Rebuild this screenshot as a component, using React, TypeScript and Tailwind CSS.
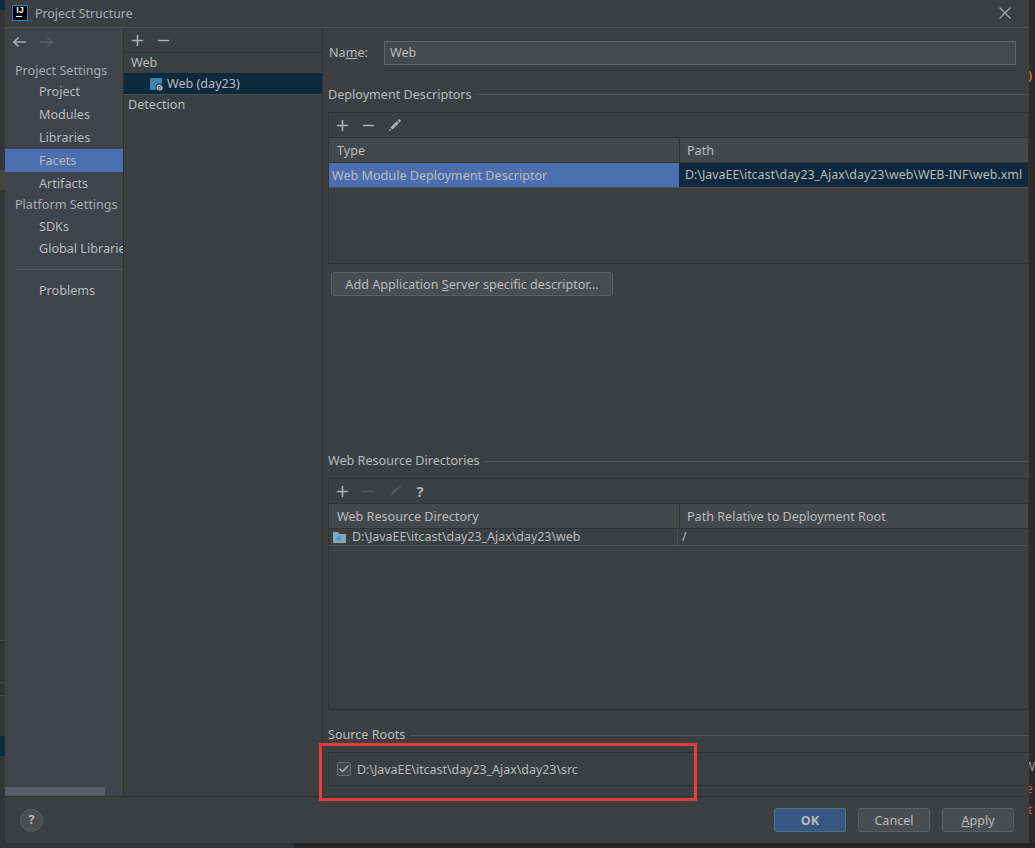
import { Check, Minus, Plus, X } from 'lucide-react';

const SIDE_ITEMS = ['Project', 'Modules', 'Libraries', 'Facets', 'Artifacts'];

function SectionTitle({ label, className, spanClass }: { label: string; className: string; spanClass?: string }) {
  return (
    <div className={`flex items-center gap-[5px] h-[18px] ${className}`}>
      <span className={`text-[#bbbbbb] whitespace-nowrap ${spanClass ?? ''}`}>{label}</span>
      <div className="flex-1 h-px bg-[#505254]" />
    </div>
  );
}

function ToolIcon({ children }: { children: React.ReactNode }) {
  return <div className="w-[26px] h-[16px] flex items-center justify-center shrink-0">{children}</div>;
}

function PencilIcon({ color }: { color: string }) {
  return (
    <svg width="15" height="15" viewBox="0 0 15 15" fill={color}>
      <path d="M3.4 9.6 9.8 3.2l2 2-6.4 6.4z" />
      <path d="M2.9 10.5l1.6 1.6-2.4.8z" />
      <path d="M10.6 2.4l.9-.9a1 1 0 0 1 1.4 0l.6.6a1 1 0 0 1 0 1.4l-.9.9z" />
    </svg>
  );
}

function HeaderCell({ label, first }: { label: string; first?: boolean }) {
  return (
    <div className={`h-full flex items-center pt-[2px] ${first ? 'w-[350px] pl-[8px]' : 'flex-1 pl-[7px]'}`}>
      <span className="text-[#bbbbbb] whitespace-nowrap">{label}</span>
    </div>
  );
}

function DialogButton({ children, primary }: { children: React.ReactNode; primary?: boolean }) {
  return (
    <button
      className={`w-[72px] h-[24px] pt-[2px] rounded-[3px] border text-[12.6px] ${
        primary
          ? 'bg-[#365880] border-[#4c708c] text-[#bbbbbb] font-bold'
          : 'bg-[#4a4d4f] border-[#5e6060] text-[#bbbbbb]'
      }`}
    >
      {children}
    </button>
  );
}

export default function App() {
  return (
    <div
      className="w-[1035px] h-[848px] overflow-hidden flex flex-col relative bg-[#2b2b2b] text-[12.6px] leading-[18px] text-[#bbbbbb]"
      style={{ fontFamily: '"Noto Sans", "Liberation Sans", sans-serif' }}
    >
      <div className="h-[843px] flex shrink-0">
        {/* sliver of the IDE behind the dialog */}
        <div className="w-[5px] h-full bg-[#323537] shrink-0 flex flex-col">
          <div className="h-[10px] bg-[#0d293e]" />
          <div className="h-[20px] mt-[160px] bg-[#45433a]" />
          <div className="h-px mt-[450px] bg-[#45484a]" />
          <div className="h-px mt-[41px] bg-[#45484a]" />
          <div className="h-px mt-[12px] bg-[#45484a]" />
          <div className="h-[20px] mt-[40px] bg-[#0d293e]" />
        </div>

        <div className="w-[1024px] h-full bg-[#3c3f41] flex flex-col shrink-0">
          {/* title bar */}
          <div className="h-[28px] flex items-center border-b border-[#515355] shrink-0 pl-[7px] pr-[14px]">
            <div className="w-[16px] h-[16px] mb-[2px] bg-black border border-[#1f7fe0] shrink-0 flex flex-col items-center justify-start">
              <span className="text-white text-[9px] leading-[9px] font-bold" style={{ fontFamily: '"Liberation Sans", sans-serif' }}>
                IJ
              </span>
              <div className="w-[6px] h-px bg-white mr-[3px] mt-[1px]" />
            </div>
            <span className="ml-[7px] mt-[1px] text-[12.4px] text-[#a9abad]">Project Structure</span>
            <X className="ml-auto mb-[2px] text-[#a3a5a7]" size={20} strokeWidth={1.5} />
          </div>

          <div className="flex-1 flex min-h-0 border-b border-[#323232]">
            {/* settings sidebar */}
            <div className="w-[119px] bg-[#3e434c] border-r border-[#323232] shrink-0 flex flex-col overflow-hidden relative">
              <div className="h-[28px] flex items-center pl-[7px] gap-[12px] shrink-0">
                <svg width="15" height="12" viewBox="0 0 15 12" fill="none" stroke="#a9acae" strokeWidth="1.7">
                  <path d="M14 6H2M6.5 1.5 2 6l4.5 4.5" />
                </svg>
                <svg width="15" height="12" viewBox="0 0 15 12" fill="none" stroke="#5b5e61" strokeWidth="1.7">
                  <path d="M1 6h12M8.5 1.5 13 6l-4.5 4.5" />
                </svg>
              </div>
              <div className="pl-[10px] h-[18px] mt-[6px] text-[#a9abad] whitespace-nowrap">Project Settings</div>
              <div>
                {SIDE_ITEMS.map((item) => (
                  <div
                    key={item}
                    className={`h-[23px] pl-[34px] flex items-center ${item === 'Facets' ? 'bg-[#4b6eaf]' : ''}`}
                  >
                    {item}
                  </div>
                ))}
              </div>
              <div className="pl-[10px] h-[18px] mt-[1px] text-[#a9abad] whitespace-nowrap">Platform Settings</div>
              <div className="h-[22px] pl-[34px] flex items-center mt-[2px]">SDKs</div>
              <div className="h-[22px] pl-[34px] flex items-center whitespace-nowrap">Global Libraries</div>
              <div className="h-px bg-[#505459] ml-[10px] mt-[9px] shrink-0" />
              <div className="h-[23px] pl-[34px] flex items-center mt-[9px]">Problems</div>
              <div className="absolute left-0 bottom-0 w-[100px] h-[9px] bg-[#5a5d66]" />
            </div>

            {/* facet tree */}
            <div className="w-[199px] shrink-0 border-r border-[#323232] flex flex-col">
              <div className="h-[25px] flex items-center border-b border-[#323232] shrink-0">
                <ToolIcon>
                  <Plus size={17} strokeWidth={2.2} className="text-[#afb1b3]" />
                </ToolIcon>
                <ToolIcon>
                  <Minus size={17} strokeWidth={2.2} className="text-[#afb1b3]" />
                </ToolIcon>
              </div>
              <div className="h-[20px] flex items-center pl-[7px]">Web</div>
              <div className="h-[20px] flex items-center pl-[26px] pt-[1px] bg-[#0d293e] border-b border-[#4b5055] box-content">
                <svg width="13" height="13" viewBox="0 0 13 13" className="shrink-0">
                  <rect x="0" y="0" width="12" height="12" fill="#3a87ad" />
                  <circle cx="9.5" cy="9.5" r="4" fill="#0d293e" />
                  <circle cx="9.5" cy="9.5" r="3" fill="#b5c4d0" />
                  <path d="M8 8.5h2l.5 1.5-1.5 1.5zM10.5 7.5l1.5 1" stroke="#3c5568" strokeWidth="0.9" fill="none" />
                </svg>
                <span className="ml-[4px] whitespace-nowrap">Web (day23)</span>
              </div>
              <div className="h-[20px] flex items-center pl-[4px]">Detection</div>
            </div>

            {/* facet detail */}
            <div className="flex-1 min-w-0 pl-[5px] flex flex-col">
              <div className="flex items-center h-[24px] mt-[13px] pr-[13px] shrink-0">
                <span className="w-[56px] pl-[1px]">
                  Na<span className="underline">m</span>e:
                </span>
                <div className="flex-1 h-[24px] bg-[#45494a] border border-[#646464] flex items-center pl-[5px]">Web</div>
              </div>

              <SectionTitle label="Deployment Descriptors" className="mt-[20px] shrink-0" spanClass="pt-[2px]" />
              <div className="mt-[9px] h-[152px] border border-[#323232] shrink-0 flex flex-col">
                <div className="h-[25px] flex items-center border-b border-[#323232] shrink-0">
                  <ToolIcon>
                    <Plus size={17} strokeWidth={2.2} className="text-[#afb1b3]" />
                  </ToolIcon>
                  <ToolIcon>
                    <Minus size={17} strokeWidth={2.2} className="text-[#afb1b3]" />
                  </ToolIcon>
                  <ToolIcon>
                    <PencilIcon color="#afb1b3" />
                  </ToolIcon>
                </div>
                <div className="h-[25px] flex items-center bg-[#45484a] border-b border-[#323232] shrink-0">
                  <HeaderCell label="Type" first />
                  <div className="w-px h-full bg-[#323232]" />
                  <HeaderCell label="Path" />
                </div>
                <div className="h-[25px] flex items-center border-b border-[#4f5254] shrink-0">
                  <div className="w-[350px] h-full bg-[#4b6eaf] flex items-center pl-[3px] pt-[2px] whitespace-nowrap">
                    Web Module Deployment Descriptor
                  </div>
                  <div className="flex-1 h-full bg-[#0d293e] flex items-center pl-[6px] text-[12.4px] whitespace-nowrap overflow-hidden">
                    D:\JavaEE\itcast\day23_Ajax\day23\web\WEB-INF\web.xml
                  </div>
                </div>
              </div>
              <button className="mt-[8px] ml-[3px] pt-[2px] w-[282px] h-[24px] shrink-0 rounded-[3px] border border-[#5e6060] bg-[#4a4d4f] text-[#bbbbbb] whitespace-nowrap">
                Add Application <span className="underline">S</span>erver specific descriptor...
              </button>

              <SectionTitle label="Web Resource Directories" className="mt-[156px] shrink-0" />
              <div className="mt-[8px] h-[232px] border border-[#323232] shrink-0 flex flex-col">
                <div className="h-[25px] flex items-center border-b border-[#323232] shrink-0">
                  <ToolIcon>
                    <Plus size={17} strokeWidth={2.2} className="text-[#afb1b3]" />
                  </ToolIcon>
                  <ToolIcon>
                    <Minus size={17} strokeWidth={2.2} className="text-[#55585a]" />
                  </ToolIcon>
                  <ToolIcon>
                    <PencilIcon color="#55585a" />
                  </ToolIcon>
                  <ToolIcon>
                    <span className="text-[#afb1b3] font-bold text-[15px]">?</span>
                  </ToolIcon>
                </div>
                <div className="h-[25px] flex items-center bg-[#45484a] border-b border-[#323232] shrink-0">
                  <HeaderCell label="Web Resource Directory" first />
                  <div className="w-px h-full bg-[#323232]" />
                  <HeaderCell label="Path Relative to Deployment Root" />
                </div>
                <div className="h-[17px] flex items-center border-b border-[#4f5254] shrink-0">
                  <div className="w-[349px] h-full flex items-center pl-[3px] border-r border-[#4f5254] whitespace-nowrap">
                    <svg width="15" height="13" viewBox="0 0 15 13" className="shrink-0">
                      <path d="M1 1h5l1.5 2H14v9H1z" fill="#8fa3b0" />
                      <circle cx="7" cy="7.5" r="2.4" fill="#2aa5dc" />
                    </svg>
                    <span className="ml-[5px] text-[12.4px]">D:\JavaEE\itcast\day23_Ajax\day23\web</span>
                  </div>
                  <span className="pl-[4px]">/</span>
                </div>
              </div>

              <SectionTitle label="Source Roots" className="mt-[16px] shrink-0" />
              <div className="mt-[8px] h-[34px] border border-[#323232] border-r-0 shrink-0 flex items-center pl-[8px]">
                <div className="w-[14px] h-[14px] rounded-[2px] bg-[#45494a] border border-[#6b6b6b] flex items-center justify-center">
                  <Check size={12} strokeWidth={3} className="text-[#a9abad]" />
                </div>
                <span className="ml-[6px] pt-[2px] text-[12.4px] whitespace-nowrap">D:\JavaEE\itcast\day23_Ajax\day23\src</span>
              </div>
            </div>
          </div>

          {/* footer */}
          <div className="h-[46px] shrink-0 flex items-center pl-[15px] pr-[15px] gap-[12px]">
            <div className="w-[23px] h-[23px] rounded-full bg-[#4a4d4f] border border-[#5e6060] flex items-center justify-center font-bold text-[#bbbbbb] mr-auto">
              ?
            </div>
            <DialogButton primary>OK</DialogButton>
            <DialogButton>Cancel</DialogButton>
            <DialogButton>
              <span className="underline">A</span>pply
            </DialogButton>
          </div>
        </div>

        {/* right edge of the editor behind the dialog */}
        <div className="flex-1 min-w-0 overflow-hidden flex flex-col items-start text-[12px] leading-[14px] bg-[#2b2b2b]">
          <span className="mt-[69px] -ml-[1px] font-bold text-[#cc7832]">)</span>
          <span className="mt-[677px] -ml-[5px] text-[#9a9a9a]">W</span>
          <span className="mt-[8px] -ml-[3px] text-[#d04a42]">e</span>
          <span className="mt-[7px] -ml-[1px] text-[#d04a42]">t</span>
        </div>
      </div>

      <div className="flex-1 flex">
        <div className="w-[294px] bg-[#323537]" />
        <div className="flex-1 bg-[#252525]" />
      </div>

      {/* annotation drawn over the screenshot */}
      <div className="absolute left-[319px] top-[743px] w-[378px] h-[58px] border-[3px] border-[#f23a3a]" />
    </div>
  );
}
